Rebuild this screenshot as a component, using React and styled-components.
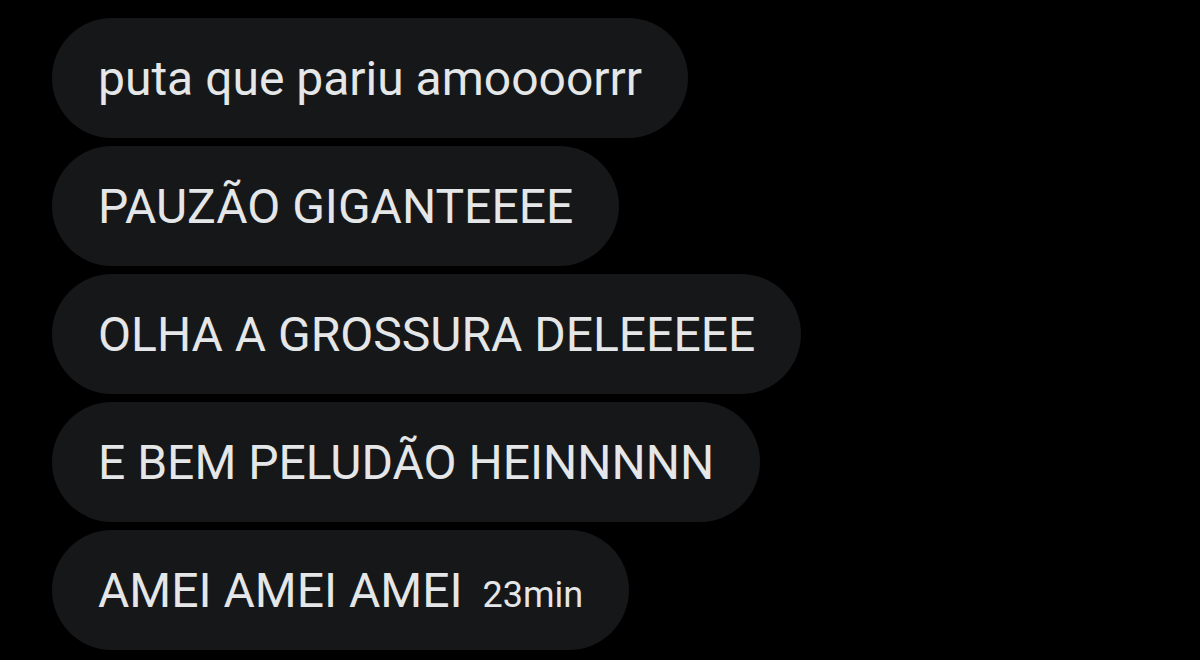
import React from 'react'
import styled, { createGlobalStyle } from 'styled-components'

const GlobalStyle = createGlobalStyle`
  html, body {
    margin: 0;
    padding: 0;
    background: #000;
  }
  body {
    font-family: Roboto, "Noto Sans", "Liberation Sans", sans-serif;
  }
`

const Thread = styled.div`
  display: flex;
  flex-direction: column;
  align-items: flex-start;
  gap: 8px;
  padding: 18px 0 0 52px;
  height: 660px;
  box-sizing: border-box;
  overflow: hidden;
`

const Bubble = styled.div`
  display: flex;
  align-items: center;
  height: 120px;
  padding: 0 46px;
  box-sizing: border-box;
  border-radius: 60px;
  background: #161719;
  color: #e4e6e7;
  font-size: 48px;
  white-space: nowrap;
`

const Time = styled.span`
  font-size: 36px;
  margin-left: 20px;
  margin-top: 10px;
`

const messages = [
  'puta que pariu amoooorrr',
  'PAUZÃO GIGANTEEEE',
  'OLHA A GROSSURA DELEEEEE',
  'E BEM PELUDÃO HEINNNNN',
]

export default function App() {
  return (
    <>
      <GlobalStyle />
      <Thread>
        {messages.map((m) => (
          <Bubble key={m}>{m}</Bubble>
        ))}
        <Bubble>
          AMEI AMEI AMEI
          <Time>23min</Time>
        </Bubble>
      </Thread>
    </>
  )
}
